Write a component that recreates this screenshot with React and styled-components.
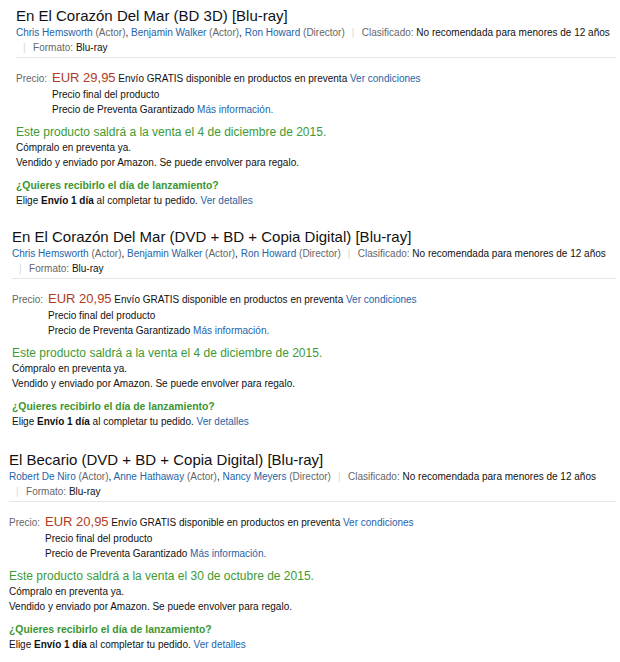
import React from "react";
import styled, { createGlobalStyle } from "styled-components";

const GlobalStyle = createGlobalStyle`
  html, body {
    margin: 0;
    padding: 0;
    background: #fff;
  }
  body {
    font-family: "Liberation Sans", Arial, sans-serif;
    color: #111;
  }
`;

const Page = styled.div`
  width: 620px;
  padding-top: 6px;
`;

const Product = styled.section`
  margin-left: ${({ $left }) => $left}px;
  margin-right: 4px;
  margin-top: ${({ $top }) => $top}px;
`;

const Title = styled.h2`
  margin: 0;
  font-size: 15px;
  line-height: 19px;
  font-weight: normal;
  color: #111;
`;

const Byline = styled.div`
  font-size: 10px;
  line-height: 15px;
`;

const Item = styled.span`
  display: inline-block;
  white-space: nowrap;
`;

const Sep = styled.span`
  color: #d8d8d8;
  margin: 0 7.5px 0 7px;
  &::before {
    content: "|";
  }
`;

const Muted = styled.span`
  color: #666;
`;

const A = styled.a`
  color: #2463a8;
  text-decoration: none;
  cursor: pointer;
`;

const Rule = styled.hr`
  margin: 2px 0 0;
  border: 0;
  border-top: 1px solid #e7e7e7;
  height: 0;
`;

const PriceRow = styled.div`
  display: flex;
  align-items: baseline;
  margin-top: 11px;
  font-size: 10px;
  line-height: 15px;
`;

const PriceLabel = styled.span`
  width: 36px;
  flex: none;
  color: #666;
`;

const PriceBody = styled.div`
  display: flex;
  flex-direction: column;
`;

const FirstLine = styled.div`
  line-height: 17px;
`;

const Price = styled.span`
  font-size: 13px;
  color: #b33b1c;
`;

const Release = styled.div`
  margin-top: 7px;
  font-size: 10px;
  line-height: 15px;
`;

const Headline = styled.div`
  font-size: 12px;
  line-height: 16px;
  color: #3d9a35;
`;

const Delivery = styled.div`
  margin-top: 8px;
  font-size: 10px;
  line-height: 15px;
`;

const Question = styled.div`
  font-weight: bold;
  font-size: 10.4px;
  color: #3a9630;
`;

const products = [
  {
    title: "En El Corazón Del Mar (BD 3D) [Blu-ray]",
    cast: [
      ["Chris Hemsworth", "Actor"],
      ["Benjamin Walker", "Actor"],
      ["Ron Howard", "Director"],
    ],
    price: "EUR 29,95",
    date: "el 4 de diciembre de 2015",
    left: 16,
    top: 0,
  },
  {
    title: "En El Corazón Del Mar (DVD + BD + Copia Digital) [Blu-ray]",
    cast: [
      ["Chris Hemsworth", "Actor"],
      ["Benjamin Walker", "Actor"],
      ["Ron Howard", "Director"],
    ],
    price: "EUR 20,95",
    date: "el 4 de diciembre de 2015",
    left: 12,
    top: 19,
  },
  {
    title: "El Becario (DVD + BD + Copia Digital) [Blu-ray]",
    cast: [
      ["Robert De Niro", "Actor"],
      ["Anne Hathaway", "Actor"],
      ["Nancy Meyers", "Director"],
    ],
    price: "EUR 20,95",
    date: "el 30 de octubre de 2015",
    left: 9,
    top: 21,
  },
];

function ProductCard({ p }) {
  return (
    <Product $left={p.left} $top={p.top}>
      <Title>{p.title}</Title>
      <Byline>
        <Item>
          {p.cast.map(([name, role], i) => (
            <React.Fragment key={name}>
              {i > 0 && ", "}
              <A>{name}</A> <Muted>({role})</Muted>
            </React.Fragment>
          ))}
        </Item>
        <Item>
          <Sep />
          <Muted>Clasificado:</Muted> No recomendada para menores de 12 años
        </Item>
        <Item>
          <Sep />
          <Muted>Formato:</Muted> Blu-ray
        </Item>
      </Byline>
      <Rule />
      <PriceRow>
        <PriceLabel>Precio:</PriceLabel>
        <PriceBody>
          <FirstLine>
            <Price>{p.price}</Price> Envío GRATIS disponible en productos en
            preventa <A>Ver condiciones</A>
          </FirstLine>
          <div>Precio final del producto</div>
          <div>
            Precio de Preventa Garantizado <A>Más información.</A>
          </div>
        </PriceBody>
      </PriceRow>
      <Release>
        <Headline>Este producto saldrá a la venta {p.date}.</Headline>
        <div>Cómpralo en preventa ya.</div>
        <div>Vendido y enviado por Amazon. Se puede envolver para regalo.</div>
      </Release>
      <Delivery>
        <Question>¿Quieres recibirlo el día de lanzamiento?</Question>
        <div>
          Elige <b>Envío 1 día</b> al completar tu pedido. <A>Ver detalles</A>
        </div>
      </Delivery>
    </Product>
  );
}

export default function App() {
  return (
    <>
      <GlobalStyle />
      <Page>
        {products.map((p) => (
          <ProductCard key={p.title} p={p} />
        ))}
      </Page>
    </>
  );
}
